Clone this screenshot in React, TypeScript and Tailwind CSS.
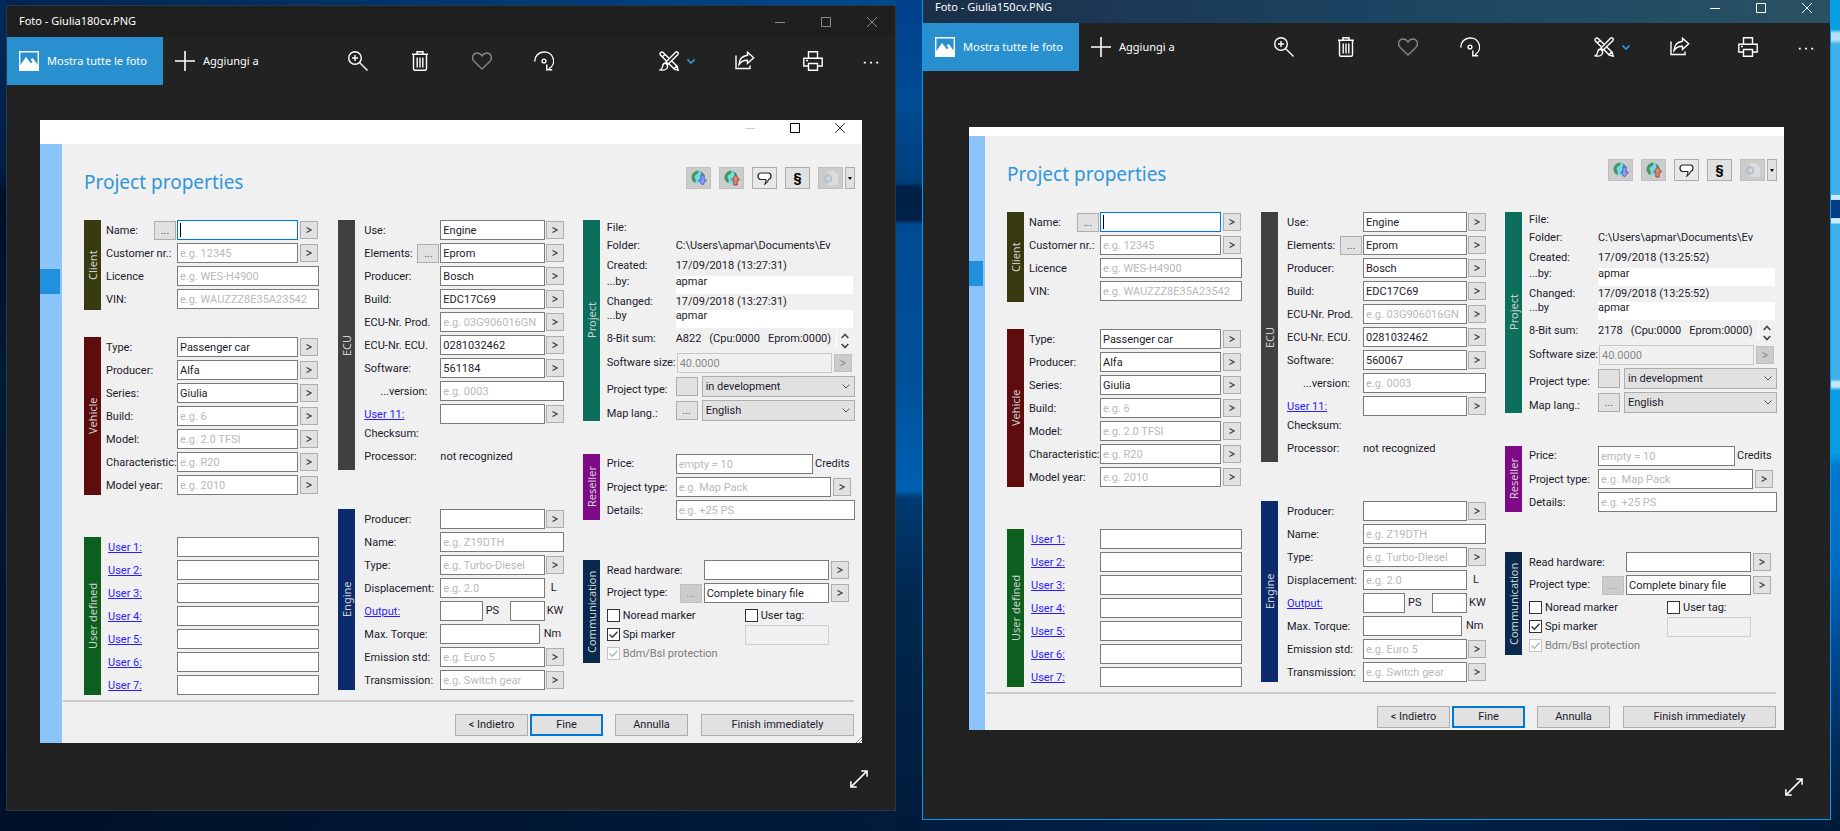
import { useId, useState } from "react";
import type { ReactNode } from "react";
import clsx from "clsx";

type Project = {
  file: string;
  active: boolean;
  software: string;
  time: string;
  sum: string;
};

const projects: Project[] = [
  { file: "Giulia180cv.PNG", active: false, software: "561184", time: "17/09/2018 (13:27:31)", sum: "A822" },
  { file: "Giulia150cv.PNG", active: true, software: "560067", time: "17/09/2018 (13:25:52)", sum: "2178" },
];

/* ---------- icons ---------- */

function WindowIcon({ kind }: { kind: "min" | "max" | "close" }) {
  return (
    <svg width="10" height="10" viewBox="0 0 10 10" fill="none" stroke="currentColor">
      {kind === "min" && <path d="M0 5.5h10" />}
      {kind === "max" && <path d="M.5.5h9v9h-9z" />}
      {kind === "close" && <path d="M0 0l10 10M10 0L0 10" />}
    </svg>
  );
}

function Icon({ children, size = 20, className }: { children: ReactNode; size?: number; className?: string }) {
  return (
    <svg
      width={size}
      height={size}
      viewBox="0 0 20 20"
      fill="none"
      stroke="currentColor"
      strokeWidth="1.4"
      className={className}
    >
      {children}
    </svg>
  );
}

const PictureIcon = () => (
  <Icon>
    <path d="M.7.7h18.6v18.6H.7z" />
    <path d="M1 14.5L7 6l5 6.500 1.500-2L19 17v2.500H1z" fill="currentColor" stroke="none" />
    <path d="M11.500 8.500l2.200-1.500 5.300 7v3z" fill="currentColor" stroke="none" />
  </Icon>
);

const PlusIcon = () => (
  <Icon>
    <path d="M10 0v20M0 10h20" strokeWidth="1.600" />
  </Icon>
);

const ZoomIcon = () => (
  <Icon>
    <circle cx="7" cy="7" r="6.300" />
    <path d="M11.500 11.500L19.500 19.500M4 7h6M7 4v6" />
  </Icon>
);

const TrashIcon = () => (
  <Icon>
    <path d="M2 3.200h16M7 3V.8h6V3M3.500 3.500v14.300q0 1.500 1.500 1.500h10q1.500 0 1.500-1.500V3.500M7.200 6.500v10M10 6.500v10M12.800 6.500v10" />
  </Icon>
);

const HeartIcon = () => (
  <Icon className="text-[#858585]">
    <path d="M10 18L2 10.200C-.5 7.500.5 2 5 2c2.500 0 4 1.200 5 3 1-1.800 2.500-3 5-3 4.500 0 5.500 5.500 3 8.200z" />
  </Icon>
);

const RotateIcon = () => (
  <Icon>
    <path d="M.8 10.500A9 9 0 0 1 10 1a9 9 0 0 1 5 16.800M12.800 13.500v5.300h5.400" />
    <circle cx="10" cy="10" r="1.900" />
  </Icon>
);

const EditIcon = () => (
  <Icon>
    <path d="M7.500 10L1.600 4.300Q.4 2.600 1.700 1.500T4.400 1.700L10 7.300M12.700 10l5.400 5.200 1.100 4-4-1.100L9.800 12.600M3.300 6L6 3.300M14.800 17.800l3-2.800" />
    <path d="M18.700 1.300q-1.200-1-2.400.1L7 10.900l2.200 2.200 9.500-9.400q1.200-1.300 0-2.400zM6.600 12q-2.600.3-2.800 2.800-.2 2.700-2.600 4 4.600 1.100 6.600-1.200 1.400-1.700.3-3.800z" />
  </Icon>
);

const ShareIcon = () => (
  <Icon>
    <path d="M1 4.500v13h14v-3M12.500 1.200l6.200 5.600-6.200 5.700V9.300Q7 9 4 13.500 4.500 5.300 12.500 4.300z" />
  </Icon>
);

const PrintIcon = () => (
  <Icon>
    <path d="M5.500 7V.8h9V7M5 15H.8V7.200h18.400V15H15M5.500 12.500h9v6.800h-9zM3 9.500h2" />
  </Icon>
);

const DotsIcon = () => (
  <Icon size={16}>
    <path d="M1 12h2.500M8.800 12h2.500M16.500 12H19" strokeWidth="2.400" />
  </Icon>
);

const ExpandIcon = () => (
  <Icon size={18}>
    <path d="M1 19L19 1M12.500 1H19v6.500M1 12.500V19h6.500" strokeWidth="1.700" />
  </Icon>
);

function GlobeIcon({ up }: { up?: boolean }) {
  return (
    <svg width="16" height="16" viewBox="0 0 16 16">
      <circle cx="7" cy="7" r="6.500" fill="#6fdcee" />
      <path d="M4 1.500Q0 4 .6 8.500 2 12.500 4.500 13q1-3-.5-5t1.500-3.500T7 .6Q5.500.6 4 1.500z" fill="#4f9457" />
      <path d="M9 1.500q2 1.500 1 3.500l3.300 2Q13.500 2.500 9 1.500z" fill="#4f9457" />
      {up ? (
        <path d="M11.500 5l4 5h-2.300v5h-3.400v-5H7.500z" fill="#e08a6c" stroke="#a4473a" />
      ) : (
        <path d="M11.500 15l4-5h-2.300V5h-3.400v5H7.500z" fill="#8d9cf0" stroke="#5560b8" />
      )}
    </svg>
  );
}

/* ---------- form parts ---------- */

const inputBase = "h-5 min-w-0 border px-[2px] text-[11px] leading-none outline-none placeholder:text-[#b9b9b9]";

function MoreButton({ disabled }: { disabled?: boolean }) {
  return (
    <button
      type="button"
      disabled={disabled}
      aria-label="Show list"
      className={clsx(
        "flex h-[18px] w-[18px] flex-none items-center justify-center border",
        disabled ? "border-[#bfbfbf] bg-[#cccccc] text-[#8f8f8f]" : "border-[#adadad] bg-[#e1e1e1] text-[#444]"
      )}
    >
      <svg width="6" height="6" viewBox="0 0 6 6" fill="none" stroke="currentColor" strokeWidth="1.2">
        <path d="M.5.5L5 3 .5 5.500" />
      </svg>
    </button>
  );
}

function DotsButton({ text = "...", disabled }: { text?: string; disabled?: boolean }) {
  return (
    <button
      type="button"
      disabled={disabled}
      aria-label="Browse"
      className={clsx(
        "h-[19px] w-[22px] flex-none border text-[11px] leading-none",
        disabled ? "border-[#bfbfbf] bg-[#cccccc] text-[#8f8f8f]" : "border-[#adadad] bg-[#e1e1e1] text-[#555]"
      )}
    >
      {text}
    </button>
  );
}

type FieldProps = {
  label: string;
  labelWidth: string;
  value?: string;
  placeholder?: string;
  more?: "gap" | "tight" | "none";
  link?: boolean;
  dots?: boolean;
  focused?: boolean;
  indent?: boolean;
  unit?: string;
};

function Field({
  label,
  labelWidth,
  value = "",
  placeholder,
  more = "none",
  link,
  dots,
  focused,
  indent,
  unit,
}: FieldProps) {
  const id = useId();
  const [text, setText] = useState(value);

  return (
    <div className="flex h-5 items-center">
      <div className={clsx("flex flex-none items-center justify-between pr-px", labelWidth)}>
        {link ? (
          <a id={`${id}-l`} href="#rename" className="pt-0.5 text-[#2a1cff] underline">
            {label}
          </a>
        ) : (
          <label id={`${id}-l`} htmlFor={id} className={clsx("pt-0.5", indent && "pl-4")}>
            {label}
          </label>
        )}
        {dots && <DotsButton />}
      </div>
      <div className="relative flex min-w-0 flex-1">
        <input
          id={id}
          aria-labelledby={`${id}-l`}
          value={text}
          placeholder={placeholder}
          onChange={(e) => setText(e.target.value)}
          className={clsx(inputBase, "w-full bg-white", focused ? "border-[#0078d7]" : "border-[#7a7a7a]")}
        />
        {focused && <span className="absolute top-[3px] left-[3px] h-[14px] w-px bg-black" />}
      </div>
      {more === "gap" && (
        <div className="ml-0.5 mr-px">
          <MoreButton />
        </div>
      )}
      {more === "tight" && (
        <div className="ml-px">
          <MoreButton />
        </div>
      )}
      {unit && <span className="w-[19px] flex-none pl-1.5">{unit}</span>}
    </div>
  );
}

function Section({
  title,
  color,
  className,
  children,
}: {
  title: string;
  color: string;
  className?: string;
  children: ReactNode;
}) {
  return (
    <section className={clsx("flex", className)}>
      <h2
        className={clsx(
          "flex w-[17px] flex-none rotate-180 items-center justify-center font-['Noto_Sans',sans-serif] text-[11px] leading-[17px] text-[#d2d2d2] [writing-mode:vertical-rl]",
          color
        )}
      >
        {title}
      </h2>
      <div className="min-w-0 flex-1">{children}</div>
    </section>
  );
}

function Check({
  label,
  defaultChecked,
  disabled,
}: {
  label: string;
  defaultChecked?: boolean;
  disabled?: boolean;
}) {
  return (
    <label className={clsx("flex h-[19px] items-center gap-[3px]", disabled && "text-[#7d7d7d]")}>
      <span className="grid">
        <input
          type="checkbox"
          defaultChecked={defaultChecked}
          disabled={disabled}
          className="peer col-start-1 row-start-1 h-[13px] w-[13px] appearance-none border border-[#333] bg-white disabled:border-[#c4c4c4]"
        />
        <svg
          viewBox="0 0 13 13"
          className="pointer-events-none invisible col-start-1 row-start-1 h-[13px] w-[13px] peer-checked:visible"
          fill="none"
          stroke={disabled ? "#b5b5b5" : "#333"}
          strokeWidth="1.300"
        >
          <path d="M2.500 6.500l2.800 2.800 5.200-5.500" />
        </svg>
      </span>
      {label}
    </label>
  );
}

function Select({ id, options }: { id: string; options: string[] }) {
  return (
    <div className="ml-1 grid flex-1 items-center">
      <select
        id={id}
        className="col-start-1 row-start-1 h-[21px] w-full appearance-none border border-[#adadad] bg-[#e1e1e1] px-[3px] text-[11px] leading-none"
      >
        {options.map((o) => (
          <option key={o}>{o}</option>
        ))}
      </select>
      <svg
        width="8"
        height="5"
        viewBox="0 0 8 5"
        fill="none"
        stroke="#555"
        className="pointer-events-none col-start-1 row-start-1 mr-[5px] justify-self-end"
      >
        <path d="M.5.5L4 4 7.500.5" />
      </svg>
    </div>
  );
}

/* ---------- columns ---------- */

const L1 = "w-[71px]";
const L2 = "w-[76px]";
const L3 = "w-[69px]";

function ClientColumn() {
  return (
    <div>
      <Section title="Client" color="bg-[#37390f]">
        <div className="flex flex-col gap-[3px] pb-px pl-[5px]">
          <Field label="Name:" labelWidth={L1} dots focused more="gap" />
          <Field label="Customer nr.:" labelWidth={L1} placeholder="e.g. 12345" more="gap" />
          <Field label="Licence" labelWidth={L1} placeholder="e.g. WES-H4900" />
          <Field label="VIN:" labelWidth={L1} placeholder="e.g. WAUZZZ8E35A23542" />
        </div>
      </Section>

      <Section title="Vehicle" color="bg-[#5e0c0e]" className="mt-[27px]">
        <div className="flex flex-col gap-[3px] pl-[5px]">
          <Field label="Type:" labelWidth={L1} value="Passenger car" more="gap" />
          <Field label="Producer:" labelWidth={L1} value="Alfa" more="gap" />
          <Field label="Series:" labelWidth={L1} value="Giulia" more="gap" />
          <Field label="Build:" labelWidth={L1} placeholder="e.g. 6" more="gap" />
          <Field label="Model:" labelWidth={L1} placeholder="e.g. 2.0 TFSI" more="gap" />
          <Field label="Characteristic:" labelWidth={L1} placeholder="e.g. R20" more="gap" />
          <Field label="Model year:" labelWidth={L1} placeholder="e.g. 2010" more="gap" />
        </div>
      </Section>

      <Section title="User defined" color="bg-[#0c5f1d]" className="mt-[42px]">
        <div className="flex flex-col gap-[3px] pl-[7px]">
          {[1, 2, 3, 4, 5, 6, 7].map((n) => (
            <Field key={n} label={`User ${n}:`} labelWidth={L3} link />
          ))}
        </div>
      </Section>
    </div>
  );
}

function Output() {
  const id = useId();
  return (
    <div className="flex h-5 items-center">
      <div className={clsx("flex-none pt-0.5", L2)}>
        <a id={id} href="#output" className="text-[#2a1cff] underline">
          Output:
        </a>
      </div>
      <input aria-labelledby={id} className={clsx(inputBase, "flex-1 border-[#7a7a7a] bg-white")} />
      <span className="w-[27px] flex-none pl-[3px]">PS</span>
      <input aria-label="KW" className={clsx(inputBase, "w-[35px] flex-none border-[#7a7a7a] bg-white")} />
      <span className="w-[19px] flex-none pl-0.5">KW</span>
    </div>
  );
}

function MaxTorque() {
  const id = useId();
  return (
    <div className="flex h-5 items-center">
      <label htmlFor={id} className={clsx("flex-none pt-0.5", L2)}>
        Max. Torque:
      </label>
      <input id={id} className={clsx(inputBase, "flex-1 border-[#7a7a7a] bg-white")} />
      <span className="w-6 flex-none pl-1">Nm</span>
    </div>
  );
}

function EcuColumn({ software }: { software: string }) {
  return (
    <div>
      <Section title="ECU" color="bg-[#404040]">
        <div className="flex flex-col gap-[3px] pl-[9px]">
          <Field label="Use:" labelWidth={L2} value="Engine" more="tight" />
          <Field label="Elements:" labelWidth={L2} value="Eprom" dots more="tight" />
          <Field label="Producer:" labelWidth={L2} value="Bosch" more="tight" />
          <Field label="Build:" labelWidth={L2} value="EDC17C69" more="tight" />
          <Field label="ECU-Nr. Prod." labelWidth={L2} placeholder="e.g. 03G906016GN" more="tight" />
          <Field label="ECU-Nr. ECU." labelWidth={L2} value="0281032462" more="tight" />
          <Field label="Software:" labelWidth={L2} value={software} more="tight" />
          <Field label="...version:" labelWidth={L2} placeholder="e.g. 0003" indent />
          <Field label="User 11:" labelWidth={L2} link more="tight" />
        </div>
        <div className="flex flex-col gap-[3px] pb-[3px] pl-[9px]">
          <div className="flex h-5 items-center">Checksum:</div>
          <div className="flex h-5 items-center">
            <span className={clsx("flex-none", L2)}>Processor:</span>
            <span>not recognized</span>
          </div>
        </div>
      </Section>

      <Section title="Engine" color="bg-[#0b2b6e]" className="mt-[39px]">
        <div className="flex flex-col gap-[3px] pl-[9px]">
          <Field label="Producer:" labelWidth={L2} more="tight" />
          <Field label="Name:" labelWidth={L2} placeholder="e.g. Z19DTH" />
          <Field label="Type:" labelWidth={L2} placeholder="e.g. Turbo-Diesel" more="tight" />
          <Field label="Displacement:" labelWidth={L2} placeholder="e.g. 2.0" unit="L" />
          <Output />
          <MaxTorque />
          <Field label="Emission std:" labelWidth={L2} placeholder="e.g. Euro 5" more="tight" />
          <Field label="Transmission:" labelWidth={L2} placeholder="e.g. Switch gear" more="tight" />
        </div>
      </Section>
    </div>
  );
}

function ProjectColumn({ project }: { project: Project }) {
  const id = useId();
  const key = "w-[69px] flex-none";

  return (
    <div>
      <Section title="Project" color="bg-[#0b6f5c]">
        <div className="pl-[7px]">
          <div className="flex h-[15px] items-center">File:</div>
          <div className="flex h-[21px] items-center">
            <span className={key}>Folder:</span>
            <span>C:\Users\apmar\Documents\Ev</span>
          </div>
          <div className="flex h-5 items-center">
            <span className={key}>Created:</span>
            <span>{project.time}</span>
          </div>
          <div className="flex h-[18px] leading-[12px]">
            <span className={key}>...by:</span>
            <span className="mr-0.5 flex-1 bg-white">apmar</span>
          </div>
          <div className="flex h-4 items-center">
            <span className={key}>Changed:</span>
            <span>{project.time}</span>
          </div>
          <div className="flex h-[18px] leading-[12px]">
            <span className={key}>...by</span>
            <span className="mr-0.5 flex-1 bg-white">apmar</span>
          </div>
          <div className="flex h-[22px] items-center">
            <span className={key}>8-Bit sum:</span>
            <span className="flex flex-1 gap-2">
              <span>{project.sum}</span>
              <span>(Cpu:0000</span>
              <span>Eprom:0000)</span>
            </span>
            <button
              type="button"
              aria-label="Scroll sums"
              className="mr-0.5 flex h-5 w-[17px] items-center justify-center border-l border-white pt-1"
            >
              <svg width="8" height="16" viewBox="0 0 8 16" fill="none" stroke="#444" strokeWidth="1.600">
                <path d="M.7 5L4 1.500 7.300 5M.7 11L4 14.500 7.300 11" />
              </svg>
            </button>
          </div>

          <div className="mt-[3px] flex h-5 items-center">
            <label htmlFor={`${id}-size`} className={key}>
              Software size:
            </label>
            <input
              id={`${id}-size`}
              disabled
              defaultValue="40.0000"
              className={clsx(inputBase, "ml-px flex-1 border-[#c8c8c8] bg-[#f0f0f0] text-[#8a8a8a]")}
            />
            <div className="mr-[3px] ml-0.5">
              <MoreButton disabled />
            </div>
          </div>
          <div className="mt-[3px] flex h-[21px] items-center">
            <label htmlFor={`${id}-type`} className={clsx(key, "pt-1.5")}>
              Project type:
            </label>
            <DotsButton text="" />
            <Select id={`${id}-type`} options={["in development", "finished"]} />
          </div>
          <div className="mt-[3px] flex h-[21px] items-center">
            <label htmlFor={`${id}-lang`} className={clsx(key, "pt-1.5")}>
              Map lang.:
            </label>
            <DotsButton />
            <Select id={`${id}-lang`} options={["English", "Italiano"]} />
          </div>
        </div>
      </Section>

      <Section title="Reseller" color="bg-[#7e0a86]" className="mt-[33px]">
        <div className="flex flex-col gap-[3px] pl-[7px]">
          <div className="flex h-5 items-center">
            <label htmlFor={`${id}-price`} className={key}>
              Price:
            </label>
            <input
              id={`${id}-price`}
              placeholder="empty = 10"
              className={clsx(inputBase, "flex-1 border-[#7a7a7a] bg-white")}
            />
            <span className="w-[42px] flex-none pl-0.5">Credits</span>
          </div>
          <div className="mr-[3px]">
            <Field label="Project type:" labelWidth={L3} placeholder="e.g. Map Pack" more="gap" />
          </div>
          <Field label="Details:" labelWidth={L3} placeholder="e.g. +25 PS" />
        </div>
      </Section>

      <Section title="Communication" color="bg-[#0b284e]" className="mt-[40px]">
        <div className="flex flex-col gap-[3px] pl-[7px]">
          <div className="mr-[5px]">
            <Field label="Read hardware:" labelWidth="w-[97px]" more="gap" />
          </div>
          <div className="mr-1.5 flex h-5 items-center">
            <label htmlFor={`${id}-comm`} className="w-[73px] flex-none">
              Project type:
            </label>
            <DotsButton disabled />
            <input
              id={`${id}-comm`}
              defaultValue="Complete binary file"
              className={clsx(inputBase, "mr-0.5 ml-0.5 flex-1 border-[#7a7a7a] bg-white")}
            />
            <MoreButton />
          </div>
          <div className="flex">
            <div className="w-[138px] flex-none">
              <Check label="Noread marker" />
              <Check label="Spi marker" defaultChecked />
              <Check label="Bdm/Bsl protection" defaultChecked disabled />
            </div>
            <div className="mr-[26px] flex-1">
              <Check label="User tag:" />
              <input
                aria-label="User tag"
                disabled
                className={clsx(inputBase, "w-full border-[#cfcfcf] bg-[#f0f0f0]")}
              />
            </div>
          </div>
        </div>
      </Section>
    </div>
  );
}

/* ---------- the project dialog ---------- */

function ProjectDialog({ project }: { project: Project }) {
  const tool = "flex h-[22px] w-[25px] items-center justify-center border";
  const action = "h-[22px] border border-[#adadad] bg-[#e1e1e1]";

  return (
    <div className="bg-white font-[Roboto,sans-serif] text-[11px] leading-[14px] whitespace-nowrap text-[#1b1b2b]">
      {project.active ? (
        <div className="h-[9px]" />
      ) : (
        <div className="flex h-6 justify-end pb-2">
          <button aria-label="Minimize dialog" className="flex w-[45px] items-center justify-center text-[#cfcfcf]">
            <WindowIcon kind="min" />
          </button>
          <button aria-label="Maximize dialog" className="flex w-[45px] items-center justify-center text-black">
            <WindowIcon kind="max" />
          </button>
          <button aria-label="Close dialog" className="flex w-[45px] items-center justify-center text-[#333]">
            <WindowIcon kind="close" />
          </button>
        </div>
      )}

      <div className="flex">
        <div className={clsx("flex-none bg-[#8bc5fc] pt-[125px] pr-0.5", project.active ? "w-4" : "w-[22px]")}>
          <div className="h-[25px] bg-[#2290dc]" />
        </div>

        <form
          onSubmit={(e) => e.preventDefault()}
          className={clsx("relative min-w-0 flex-1 bg-[#f0f0f0]", project.active ? "pb-0.5" : "pb-[7px]")}
        >
          <div className="flex h-[76px] items-start justify-between pt-[23px] pr-[7px] pl-[22px]">
            <h1 className="font-['Noto_Sans',sans-serif] text-[19px] leading-[30px] text-[#2f96d8]">
              Project properties
            </h1>
            <div className="flex gap-2">
              <button type="button" aria-label="Download" className={clsx(tool, "border-[#bfbfbf] bg-[#cccccc]")}>
                <GlobeIcon />
              </button>
              <button type="button" aria-label="Upload" className={clsx(tool, "border-[#bfbfbf] bg-[#cccccc]")}>
                <GlobeIcon up />
              </button>
              <button type="button" aria-label="Comment" className={clsx(tool, "border-[#adadad] bg-[#e8e8e8]")}>
                <svg width="15" height="13" viewBox="0 0 15 13" fill="#fff" stroke="#222" strokeWidth="1.200">
                  <path d="M3.500 1h8Q14 1.200 14 4t-2.500 3.500Q11 10.500 8 12q1.300-2.500.8-4.500H3.500Q1 7 1 4.200T3.500 1z" />
                </svg>
              </button>
              <button
                type="button"
                aria-label="Terms"
                className={clsx(tool, "border-[#adadad] bg-[#e1e1e1] text-[13px] font-bold text-black")}
              >
                §
              </button>
              <div className="flex gap-0.5">
                <button type="button" aria-label="Settings" className={clsx(tool, "border-[#bfbfbf] bg-[#cccccc]")}>
                  <svg width="16" height="16" viewBox="0 0 16 16" fill="none">
                    <path d="M5 1h6l4 4v10H5z" fill="#dcdcdc" />
                    <circle cx="5" cy="8.500" r="3.300" stroke="#b4c0cc" strokeWidth="2" />
                  </svg>
                </button>
                <button
                  type="button"
                  aria-label="More settings"
                  className="flex h-[22px] w-2.5 items-center justify-center border border-[#adadad] bg-[#e1e1e1]"
                >
                  <svg width="4" height="3" viewBox="0 0 4 3">
                    <path d="M0 0h4L2 3z" />
                  </svg>
                </button>
              </div>
            </div>
          </div>

          <div className="grid grid-cols-[minmax(0,235fr)_minmax(0,225fr)_minmax(0,272fr)] gap-x-[19px] pr-[7px] pl-[22px]">
            <ClientColumn />
            <EcuColumn software={project.software} />
            <ProjectColumn project={project} />
          </div>

          <div className="mt-[5px] mr-2 ml-px border-t-2 border-[#c9c9c9]" />

          <div className="mt-3 flex justify-end pr-2">
            <button type="button" className={clsx(action, "w-[73px]")}>
              &lt; Indietro
            </button>
            <button type="submit" className="ml-0.5 h-[22px] w-[73px] border-2 border-[#0078d7] bg-[#e1e1e1]">
              Fine
            </button>
            <button type="button" className={clsx(action, "ml-3 w-[73px]")}>
              Annulla
            </button>
            <button type="button" className={clsx(action, "ml-[13px] w-[153px]")}>
              Finish immediately
            </button>
          </div>

          {!project.active && (
            <svg width="6" height="6" viewBox="0 0 6 6" className="absolute right-0 bottom-0">
              <path d="M6 0v6H0z" fill="#fff" />
              <path d="M0 6l6-6M3 6l3-3" stroke="#8a8a8a" />
            </svg>
          )}
        </form>
      </div>
    </div>
  );
}

/* ---------- photo viewer window ---------- */

function ToolButton({ label, children }: { label: string; children: ReactNode }) {
  return (
    <button aria-label={label} className="flex h-12 w-[62px] items-center justify-center">
      {children}
    </button>
  );
}

function PhotoWindow({ project }: { project: Project }) {
  const { active } = project;

  return (
    <div
      className={clsx(
        "flex min-w-0 flex-col border bg-[#222222] font-['Noto_Sans',sans-serif] text-[11px] text-white",
        active ? "-mt-[9px] border-[#0a96f5]" : "border-[#2c3742]"
      )}
    >
      <div
        className={clsx(
          "flex h-[31px] flex-none items-center justify-between",
          active ? "bg-linear-to-r from-[#1b2f49] via-[#1b4462] to-[#2a5163]" : "bg-[#1f1f1f]"
        )}
      >
        <span className="pl-3">Foto - {project.file}</span>
        <div className={clsx("flex h-full", active ? "text-white" : "text-[#8c8c8c]")}>
          <button aria-label="Minimize" className="flex w-[46px] items-center justify-center">
            <WindowIcon kind="min" />
          </button>
          <button aria-label="Maximize" className="flex w-[46px] items-center justify-center">
            <WindowIcon kind="max" />
          </button>
          <button aria-label="Close" className="flex w-[46px] items-center justify-center">
            <WindowIcon kind="close" />
          </button>
        </div>
      </div>

      <div className="grid h-12 flex-none grid-cols-[1fr_auto_1fr]">
        <div className="flex">
          <button className="flex w-[156px] flex-none items-center gap-2 bg-[#2990cf] pl-3 whitespace-nowrap">
            <PictureIcon />
            Mostra tutte le foto
          </button>
          <button className="flex items-center gap-2 pl-3 whitespace-nowrap">
            <PlusIcon />
            Aggiungi a
          </button>
        </div>
        <div className="flex">
          <ToolButton label="Zoom">
            <ZoomIcon />
          </ToolButton>
          <ToolButton label="Elimina">
            <TrashIcon />
          </ToolButton>
          <ToolButton label="Preferiti">
            <HeartIcon />
          </ToolButton>
          <ToolButton label="Ruota">
            <RotateIcon />
          </ToolButton>
        </div>
        <div className="flex justify-end">
          <button aria-label="Modifica" className="flex items-center gap-2 pr-4">
            <EditIcon />
            <svg width="8" height="5" viewBox="0 0 8 5" fill="none" stroke="#2f96e0" strokeWidth="1.600">
              <path d="M.5.5L4 4 7.500.5" />
            </svg>
          </button>
          <button aria-label="Condividi" className="flex w-[68px] items-center justify-center">
            <ShareIcon />
          </button>
          <button aria-label="Stampa" className="flex w-[68px] items-center justify-center">
            <PrintIcon />
          </button>
          <button aria-label="Altro" className="flex w-12 items-center justify-center">
            <DotsIcon />
          </button>
        </div>
      </div>

      <div className={active ? "px-[46px] pt-14" : "px-[33px] pt-[35px]"}>
        <ProjectDialog project={project} />
      </div>

      <div className={clsx("flex justify-end pr-[27px]", active ? "pt-12 pb-[23px]" : "pt-[27px] pb-[22px]")}>
        <button aria-label="Schermo intero">
          <ExpandIcon />
        </button>
      </div>
    </div>
  );
}

export default function App() {
  return (
    <main className="flex min-h-screen overflow-hidden bg-[linear-gradient(90deg,#001128_0%,#001a3a_45%,#00224a_70%,#001a38_100%)]">
      <div className="w-1.5 flex-none bg-[linear-gradient(180deg,#002a5c_0%,#001f45_20%,#000f26_24%,#001a38_45%,#001028_100%)]" />
      <div className="min-w-0 flex-[890]">
        <div className="h-[5px] bg-linear-to-r from-[#002450] to-[#004a91]" />
        <PhotoWindow project={projects[0]} />
      </div>
      <div className="w-[26px] flex-none bg-[linear-gradient(180deg,#00408a_0%,#004c94_12%,#003f7c_22%,#002147_22.5%,#002147_26.5%,#004a91_27%,#005099_45%,#0060b0_59%,#003a70_60%,#00284f_72%,#001a3a_100%)]" />
      <div className="min-w-0 flex-[909]">
        <PhotoWindow project={projects[1]} />
      </div>
      <div className="w-[9px] flex-none bg-[linear-gradient(180deg,#069fe2_0%,#069fe2_3.5%,#b5dff2_4%,#b5dff2_4.8%,#3fb0e8_5.3%,#3fb0e8_23.4%,#cfeaf7_23.5%,#cfeaf7_24%,#003f85_24.1%,#003f85_26.200%,#cfeaf7_26.300%,#cfeaf7_26.800%,#3fb0e8_27%,#3fb0e8_45.600%,#c5e6f5_46%,#c5e6f5_46.500%,#069fe2_47%,#069fe2_54.500%,#0078d0_56%,#006cc0_68%,#004a92_78%,#002c58_90%,#001a38_100%)]" />
    </main>
  );
}
